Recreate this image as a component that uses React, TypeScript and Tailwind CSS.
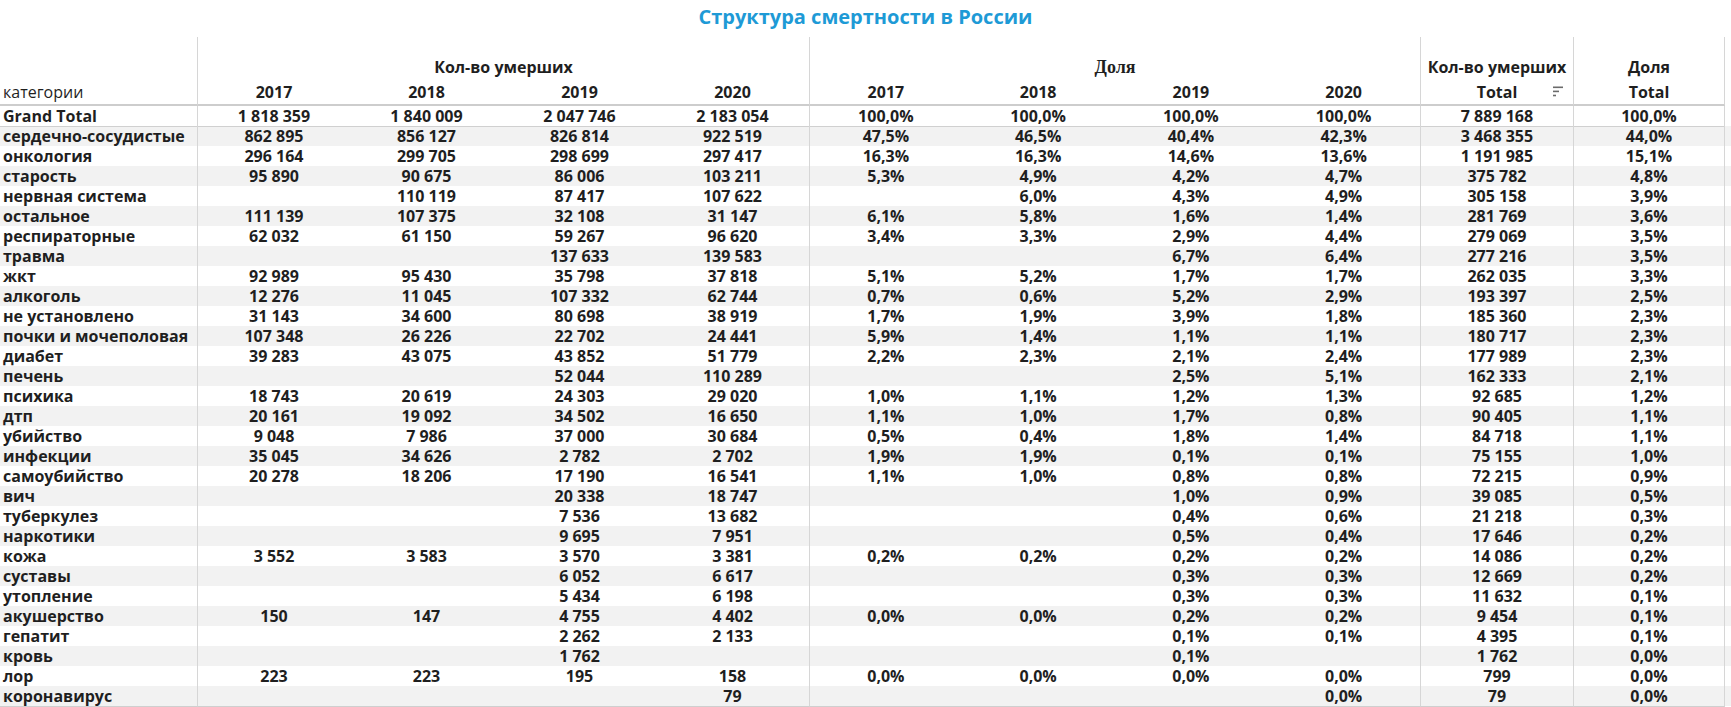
import React from "react";

// Структура смертности — сводная таблица (Tableau-подобная кросс-таблица)

type Row = [string, ...string[]];

const ROWS: Row[] = [
  ["сердечно-сосудистые", "862 895", "856 127", "826 814", "922 519", "47,5%", "46,5%", "40,4%", "42,3%", "3 468 355", "44,0%"],
  ["онкология", "296 164", "299 705", "298 699", "297 417", "16,3%", "16,3%", "14,6%", "13,6%", "1 191 985", "15,1%"],
  ["старость", "95 890", "90 675", "86 006", "103 211", "5,3%", "4,9%", "4,2%", "4,7%", "375 782", "4,8%"],
  ["нервная система", "", "110 119", "87 417", "107 622", "", "6,0%", "4,3%", "4,9%", "305 158", "3,9%"],
  ["остальное", "111 139", "107 375", "32 108", "31 147", "6,1%", "5,8%", "1,6%", "1,4%", "281 769", "3,6%"],
  ["респираторные", "62 032", "61 150", "59 267", "96 620", "3,4%", "3,3%", "2,9%", "4,4%", "279 069", "3,5%"],
  ["травма", "", "", "137 633", "139 583", "", "", "6,7%", "6,4%", "277 216", "3,5%"],
  ["жкт", "92 989", "95 430", "35 798", "37 818", "5,1%", "5,2%", "1,7%", "1,7%", "262 035", "3,3%"],
  ["алкоголь", "12 276", "11 045", "107 332", "62 744", "0,7%", "0,6%", "5,2%", "2,9%", "193 397", "2,5%"],
  ["не установлено", "31 143", "34 600", "80 698", "38 919", "1,7%", "1,9%", "3,9%", "1,8%", "185 360", "2,3%"],
  ["почки и мочеполовая", "107 348", "26 226", "22 702", "24 441", "5,9%", "1,4%", "1,1%", "1,1%", "180 717", "2,3%"],
  ["диабет", "39 283", "43 075", "43 852", "51 779", "2,2%", "2,3%", "2,1%", "2,4%", "177 989", "2,3%"],
  ["печень", "", "", "52 044", "110 289", "", "", "2,5%", "5,1%", "162 333", "2,1%"],
  ["психика", "18 743", "20 619", "24 303", "29 020", "1,0%", "1,1%", "1,2%", "1,3%", "92 685", "1,2%"],
  ["дтп", "20 161", "19 092", "34 502", "16 650", "1,1%", "1,0%", "1,7%", "0,8%", "90 405", "1,1%"],
  ["убийство", "9 048", "7 986", "37 000", "30 684", "0,5%", "0,4%", "1,8%", "1,4%", "84 718", "1,1%"],
  ["инфекции", "35 045", "34 626", "2 782", "2 702", "1,9%", "1,9%", "0,1%", "0,1%", "75 155", "1,0%"],
  ["самоубийство", "20 278", "18 206", "17 190", "16 541", "1,1%", "1,0%", "0,8%", "0,8%", "72 215", "0,9%"],
  ["вич", "", "", "20 338", "18 747", "", "", "1,0%", "0,9%", "39 085", "0,5%"],
  ["туберкулез", "", "", "7 536", "13 682", "", "", "0,4%", "0,6%", "21 218", "0,3%"],
  ["наркотики", "", "", "9 695", "7 951", "", "", "0,5%", "0,4%", "17 646", "0,2%"],
  ["кожа", "3 552", "3 583", "3 570", "3 381", "0,2%", "0,2%", "0,2%", "0,2%", "14 086", "0,2%"],
  ["суставы", "", "", "6 052", "6 617", "", "", "0,3%", "0,3%", "12 669", "0,2%"],
  ["утопление", "", "", "5 434", "6 198", "", "", "0,3%", "0,3%", "11 632", "0,1%"],
  ["акушерство", "150", "147", "4 755", "4 402", "0,0%", "0,0%", "0,2%", "0,2%", "9 454", "0,1%"],
  ["гепатит", "", "", "2 262", "2 133", "", "", "0,1%", "0,1%", "4 395", "0,1%"],
  ["кровь", "", "", "1 762", "", "", "", "0,1%", "", "1 762", "0,0%"],
  ["лор", "223", "223", "195", "158", "0,0%", "0,0%", "0,0%", "0,0%", "799", "0,0%"],
  ["коронавирус", "", "", "", "79", "", "", "", "0,0%", "79", "0,0%"],
];

const GRAND: Row = ["Grand Total", "1 818 359", "1 840 009", "2 047 746", "2 183 054", "100,0%", "100,0%", "100,0%", "100,0%", "7 889 168", "100,0%"];

const GRID = "grid grid-cols-[197px_repeat(4,153px)_repeat(4,152.75px)_153px_152px]";

// разделители групп столбцов
function sep(i: number) {
  if (i === 1 || i === 5 || i === 9) return "border-l border-[#d6d6d6]";
  if (i === 10) return "border-l border-r border-[#d6d6d6]";
  return "";
}

function SortIcon() {
  return (
    <svg width="11" height="11" viewBox="0 0 11 11" className="absolute right-[9px] top-[6px]" aria-hidden="true">
      <rect x="0" y="0.5" width="10" height="1.6" fill="#6b6b6b" />
      <rect x="0" y="4.6" width="6" height="1.6" fill="#6b6b6b" />
      <rect x="0" y="8.7" width="3" height="1.6" fill="#6b6b6b" />
    </svg>
  );
}

function DataRow({ row, striped, last, grand }: { row: Row; striped: boolean; last?: boolean; grand?: boolean }) {
  const bg = striped ? "bg-[#f2f2f2]" : "bg-white";
  const bottom = grand ? "border-b border-b-[#d0d0d0]" : last ? "border-b border-b-[#cfcfcf]" : "";
  return (
    <div className={`${GRID} h-[20px] ${bg}`}>
      {row.map((v, i) => (
        <div
          key={i}
          className={`${sep(i)} ${bottom} box-border flex items-center leading-[20px] whitespace-nowrap ${
            i === 0 ? "justify-start pl-[3px]" : "justify-center"
          }`}
        >
          {v}
        </div>
      ))}
    </div>
  );
}

export default function App() {
  return (
    <div className="w-[1731px] h-[707px] overflow-hidden bg-white text-[#1f1f1f] font-['Open_Sans',sans-serif] text-[16px] font-bold">
      <div className="h-[37px] pt-[4px] text-center text-[20px] leading-[26px] text-[#1e9ad6]">
        Структура смертности в России
      </div>

      {/* шапка: группы */}
      <div className={`${GRID} h-[43px]`}>
        <div />
        <div className={`${sep(1)} col-span-4 flex items-end justify-center pb-[3px] leading-[20px]`}>Кол-во умерших</div>
        <div className={`${sep(5)} col-span-4 flex items-end justify-center pb-[2px] leading-[22px] font-['Liberation_Serif',serif] text-[18px]`}>
          Доля
        </div>
        <div className={`${sep(9)} flex items-end justify-center pb-[3px] leading-[20px]`}>Кол-во умерших</div>
        <div className={`${sep(10)} flex items-end justify-center pb-[3px] leading-[20px]`}>Доля</div>
      </div>

      {/* шапка: годы */}
      <div className={`${GRID} h-[26px]`}>
        {["категории", "2017", "2018", "2019", "2020", "2017", "2018", "2019", "2020", "Total", "Total"].map((h, i) => (
          <div
            key={i}
            className={`${sep(i)} relative box-border border-b-2 border-b-[#cdcdcd] flex items-start pt-[2px] leading-[20px] ${
              i === 0 ? "justify-start pl-[3px] font-normal" : "justify-center"
            }`}
          >
            {h}
            {i === 9 && <SortIcon />}
          </div>
        ))}
      </div>

      <DataRow row={GRAND} striped={false} grand />
      {ROWS.map((r, idx) => (
        <DataRow key={r[0]} row={r} striped={idx % 2 === 0} last={idx === ROWS.length - 1} />
      ))}
    </div>
  );
}
